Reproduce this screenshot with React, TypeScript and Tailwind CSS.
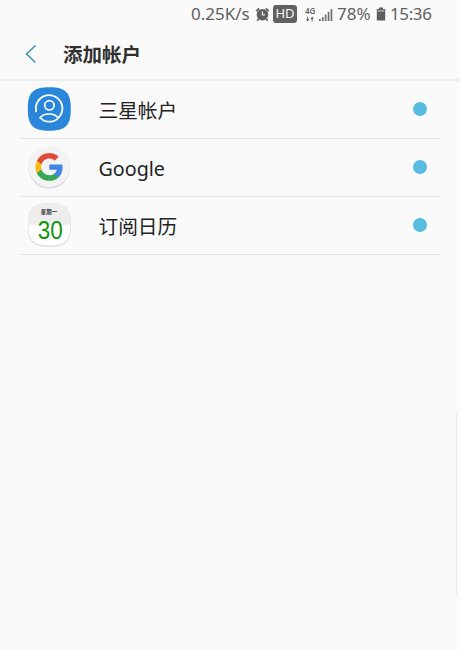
import React from "react";

const AlarmIcon = () => (
  <svg width="15" height="15" viewBox="0 0 15 15" fill="none">
    <circle cx="7.5" cy="7.7" r="5.8" fill="#606060" />
    <path d="M1.2 4.2 L4.2 1.4 M13.8 4.2 L10.8 1.4" stroke="#606060" strokeWidth="1.8" />
    <path d="M3.6 12 L2.4 13.8 M11.4 12 L12.6 13.8" stroke="#606060" strokeWidth="1.8" />
    <path d="M7.5 4.5 V8 H10.2" stroke="#fafafa" strokeWidth="1.2" />
  </svg>
);

const DataArrowsIcon = () => (
  <svg width="8" height="6" viewBox="0 0 8 6" fill="#606060">
    <path d="M0 3 H1.2 V0.5 H2.2 V3 H3.4 L1.7 5.5 Z" />
    <path d="M4.4 3 L6.1 0.5 L7.8 3 H6.6 V5.5 H5.6 V3 Z" />
  </svg>
);

const SignalIcon = () => (
  <svg width="14" height="13" viewBox="0 0 14 13" fill="#707070">
    <rect x="0" y="11" width="1.7" height="2" />
    <rect x="2.9" y="9" width="1.7" height="4" />
    <rect x="5.8" y="6.5" width="1.7" height="6.5" />
    <rect x="8.7" y="3.8" width="1.7" height="9.2" />
    <rect x="11.6" y="1" width="1.7" height="12" />
  </svg>
);

const BatteryIcon = () => (
  <svg width="10" height="14" viewBox="0 0 10 14">
    <path d="M3 0.5 H7 V2 H9.2 V13.5 H0.8 V2 H3 Z" fill="#606060" />
    <rect x="1.8" y="3" width="6.4" height="1.7" fill="#a5a5a5" />
  </svg>
);

const SamsungIcon = () => (
  <svg width="44" height="44" viewBox="0 0 44 44" fill="none">
    <path
      d="M22.3 0.3 C38.5 0.3 43.8 5.5 43.8 22 C43.8 38.5 38.5 43.7 22.3 43.7 C6 43.7 0.8 38.5 0.8 22 C0.8 5.5 6 0.3 22.3 0.3 Z"
      fill="#2a86da"
    />
    {/* ring and the lower edge of the shoulders are one stroke */}
    <path
      d="M9.2 24.5 A13.3 13.3 0 1 1 31 31.3 C28.5 33.6 25.5 34.7 22.2 34.7 C18.6 34.7 15.5 33.4 13.2 30.8"
      stroke="#fff"
      strokeWidth="1.7"
      strokeLinecap="round"
    />
    <circle cx="22.4" cy="18.3" r="4.7" stroke="#fff" strokeWidth="1.7" />
    <path
      d="M13.2 30.8 C15 28.2 18.2 27 22.2 27 C26.2 27 29.3 28.3 31 31"
      stroke="#fff"
      strokeWidth="1.7"
      strokeLinecap="round"
    />
  </svg>
);

const GoogleIcon = () => (
  <svg width="44" height="44" viewBox="0 0 44 44">
    <circle cx="22.2" cy="22.6" r="20.9" fill="#d4d4d4" />
    <circle cx="22.2" cy="21.7" r="20.7" fill="#f3f3f3" />
    <g transform="translate(7.2 6.8) scale(1.26)">
      <path
        d="M22.56 12.25c0-.78-.07-1.53-.2-2.25H12v4.26h5.92c-.26 1.37-1.04 2.53-2.21 3.31v2.77h3.57c2.08-1.92 3.28-4.74 3.28-8.09z"
        fill="#4285e4"
      />
      <path
        d="M12 23c2.97 0 5.46-.98 7.28-2.66l-3.57-2.77c-.98.66-2.23 1.06-3.71 1.06-2.86 0-5.29-1.93-6.16-4.53H2.18v2.84C3.99 20.53 7.7 23 12 23z"
        fill="#34a853"
      />
      <path
        d="M5.84 14.09c-.22-.66-.35-1.36-.35-2.09s.13-1.43.35-2.09V7.07H2.18C1.43 8.55 1 10.22 1 12s.43 3.45 1.18 4.93l3.66-2.84z"
        fill="#f5bc15"
      />
      <path
        d="M12 5.38c1.62 0 3.06.56 4.21 1.64l3.15-3.15C17.45 2.09 14.97 1 12 1 7.7 1 3.99 3.47 2.18 7.07l3.66 2.84c.87-2.6 3.3-4.53 6.16-4.53z"
        fill="#e04b3c"
      />
    </g>
  </svg>
);

const CalendarIcon = () => (
  <div className="relative h-11 w-11">
    <svg width="44" height="44" viewBox="0 0 44 44">
      <path
        d="M22.3 0.3 C38.5 0.3 43.8 5.5 43.8 22 C43.8 38.5 38.5 43.7 22.3 43.7 C6 43.7 0.8 38.5 0.8 22 C0.8 5.5 6 0.3 22.3 0.3 Z"
        fill="#d8d8d8"
      />
      <path
        d="M22.3 0.8 C38 0.8 43.2 5.5 43.2 21.7 C43.2 37.5 38 42.6 22.3 42.6 C6.5 42.6 1.4 37.5 1.4 21.7 C1.4 5.5 6.5 0.8 22.3 0.8 Z"
        fill="#fff"
      />
      <path
        d="M22.3 0.8 C38 0.8 43.2 5.5 43.2 21.7 H1.4 C1.4 5.5 6.5 0.8 22.3 0.8 Z"
        fill="#ededed"
      />
    </svg>
    <div className="absolute inset-0 flex flex-col items-center">
      <span className="mt-[6px] font-['Noto_Sans_CJK_SC',sans-serif] text-[5.5px] leading-[7px] font-bold text-[#333]">
        星期一
      </span>
      <span className="mt-[2px] ml-[2px] origin-center scale-x-[0.88] font-['Liberation_Sans',sans-serif] text-[25.5px] leading-[24px] text-[#13940f]">
        30
      </span>
    </div>
  </div>
);

const accounts = [
  { icon: SamsungIcon, label: "三星帐户" },
  { icon: GoogleIcon, label: "Google" },
  { icon: CalendarIcon, label: "订阅日历" },
];

const StatusBar = () => (
  <div className="flex h-7 items-center pl-[191px] text-[17px] whitespace-nowrap text-[#606060]">
    <span className="w-[64px]">0.25K/s</span>
    <AlarmIcon />
    <span className="ml-[3px] flex h-[18px] w-6 items-center justify-center rounded-[3px] bg-[#606060] text-[13px] text-[#fafafa]">
      HD
    </span>
    <div className="ml-2 flex w-[14px] flex-col items-start">
      <span className="text-[8px] leading-[8px] font-semibold">4G</span>
      <span className="mt-px ml-px">
        <DataArrowsIcon />
      </span>
    </div>
    <SignalIcon />
    <span className="ml-[4px] w-[39px]">78%</span>
    <BatteryIcon />
    <span className="ml-[4px] tracking-[-0.4px]">15:36</span>
  </div>
);

const AddAccount = () => {
  return (
    <div className="relative h-[650px] w-[460px] overflow-hidden bg-[#fafafa] font-['Noto_Sans','Noto_Sans_CJK_SC',sans-serif]">
      <StatusBar />

      <header className="flex h-[53px] items-center border-b-2 border-[#ececec] pl-6">
        <svg width="14" height="20" viewBox="0 0 14 20" fill="none">
          <path d="M11.5 1.5 L2.5 10 L11.5 18.5" stroke="#4296ad" strokeWidth="1.6" />
        </svg>
        <h1 className="mt-[2px] ml-[25px] text-[19.5px] leading-6 font-bold text-[#303030]">
          添加帐户
        </h1>
      </header>

      <ul className="mx-5">
        {accounts.map((item) => (
          <li
            key={item.label}
            className="flex h-[58px] items-center border-b border-[#e6e6e6] pr-[13px] pb-[2px] pl-[7px]"
          >
            <item.icon />
            <span className="mt-[5px] ml-[27.5px] text-[19.7px] leading-7 text-[#222]">
              {item.label}
            </span>
            <span className="ml-auto h-[14px] w-[14px] rounded-full bg-[#57bce0]" />
          </li>
        ))}
      </ul>

      {/* edge panel handle */}
      <div className="absolute top-[410px] -right-2 h-[188px] w-3 rounded-md border border-[#e9e9e9] bg-[#fcfcfc]" />
    </div>
  );
};

export default AddAccount;
